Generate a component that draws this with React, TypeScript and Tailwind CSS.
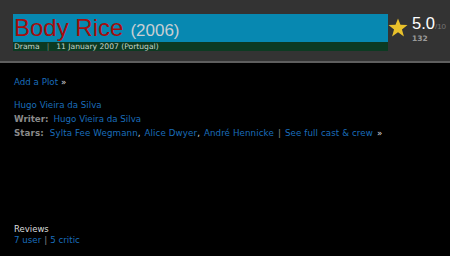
import React from "react";

const Star = () => (
  <svg width="20" height="19" viewBox="0 0 24 23" className="block">
    <polygon
      points="12,0.5 15,8.3 23.5,8.6 16.8,13.9 19.2,22.3 12,17.4 4.8,22.3 7.2,13.9 0.5,8.6 9,8.3"
      fill="#e9c12b"
    />
  </svg>
);

export default function App() {
  const link = "text-[#1a6dbb]";
  return (
    <div className="w-[450px] h-[256px] bg-black overflow-hidden" style={{ fontFamily: '"DejaVu Sans", Verdana, sans-serif' }}>
      {/* header */}
      <div className="h-[61px] bg-[#333333] pl-[13px] pt-[14px] flex">
        <div className="w-[375px]">
          <div className="h-[28px] bg-[#0788b1] pl-[1px] whitespace-nowrap leading-[28px]" style={{ fontFamily: '"Liberation Sans", Arial, sans-serif' }}>
            <span className="text-[24px] text-[#a50d0d]">Body Rice</span>
            <span className="text-[17px] text-[#c9cfd3] ml-[7px]">(2006)</span>
          </div>
          <div className="h-[9px] bg-[#0c3a22] pl-[1px] text-[7.6px] leading-[9px] text-[#c7d6cc] whitespace-nowrap">
            Drama<span className="mx-[7px] text-[#7a8a80]">|</span>11 January 2007 (Portugal)
          </div>
        </div>
        <div className="pt-[4px]">
          <Star />
        </div>
        <div className="pl-[4px]" style={{ fontFamily: '"Liberation Sans", Arial, sans-serif' }}>
          <div className="leading-[18px] whitespace-nowrap">
            <span className="text-[16.5px] text-white">5.0</span>
            <span className="text-[8px] text-[#777]">/10</span>
          </div>
          <div className="text-[7.5px] font-bold text-[#9a9a9a] leading-[9px] -mt-[2px]" style={{ fontFamily: '"DejaVu Sans", Verdana, sans-serif' }}>132</div>
        </div>
      </div>
      <div className="h-[2px] bg-[#5e5e5e]" />

      {/* body */}
      <div className="pl-[14px] pt-[12px] text-[8.7px] leading-[14px]">
        <div>
          <span className={link}>Add a Plot</span>
          <span className="text-[#dddddd] ml-[3px]">»</span>
        </div>
        <div className="mt-[8.6px]">
          <span className={link}>Hugo Vieira da Silva</span>
        </div>
        <div className="whitespace-nowrap">
          <span className="text-[#8a8a8a] font-bold">Writer:</span>
          <span className={`${link} ml-[5px]`}>Hugo Vieira da Silva</span>
        </div>
        <div className="whitespace-nowrap tracking-[0.1px]">
          <span className="text-[#8a8a8a] font-bold">Stars:</span>
          <span className={`${link} ml-[6px]`}>Sylta Fee Wegmann</span>
          <span className="text-[#dddddd] mr-[1px]">, </span>
          <span className={link}>Alice Dwyer</span>
          <span className="text-[#dddddd] mr-[1px]">, </span>
          <span className={link}>André Hennicke</span>
          <span className="text-[#8a8a8a] mx-[4px]">|</span>
          <span className={link}>See full cast &amp; crew</span>
          <span className="text-[#dddddd] ml-[4px]">»</span>
        </div>

        <div className="mt-[84px] leading-[11px]">
          <div className="text-[#dddddd] text-[8.5px]">Reviews</div>
          <div className="whitespace-nowrap">
            <span className={link}>7 user</span>
            <span className="text-[#8a8a8a] mx-[3px]">|</span>
            <span className={link}>5 critic</span>
          </div>
        </div>
      </div>
    </div>
  );
}
